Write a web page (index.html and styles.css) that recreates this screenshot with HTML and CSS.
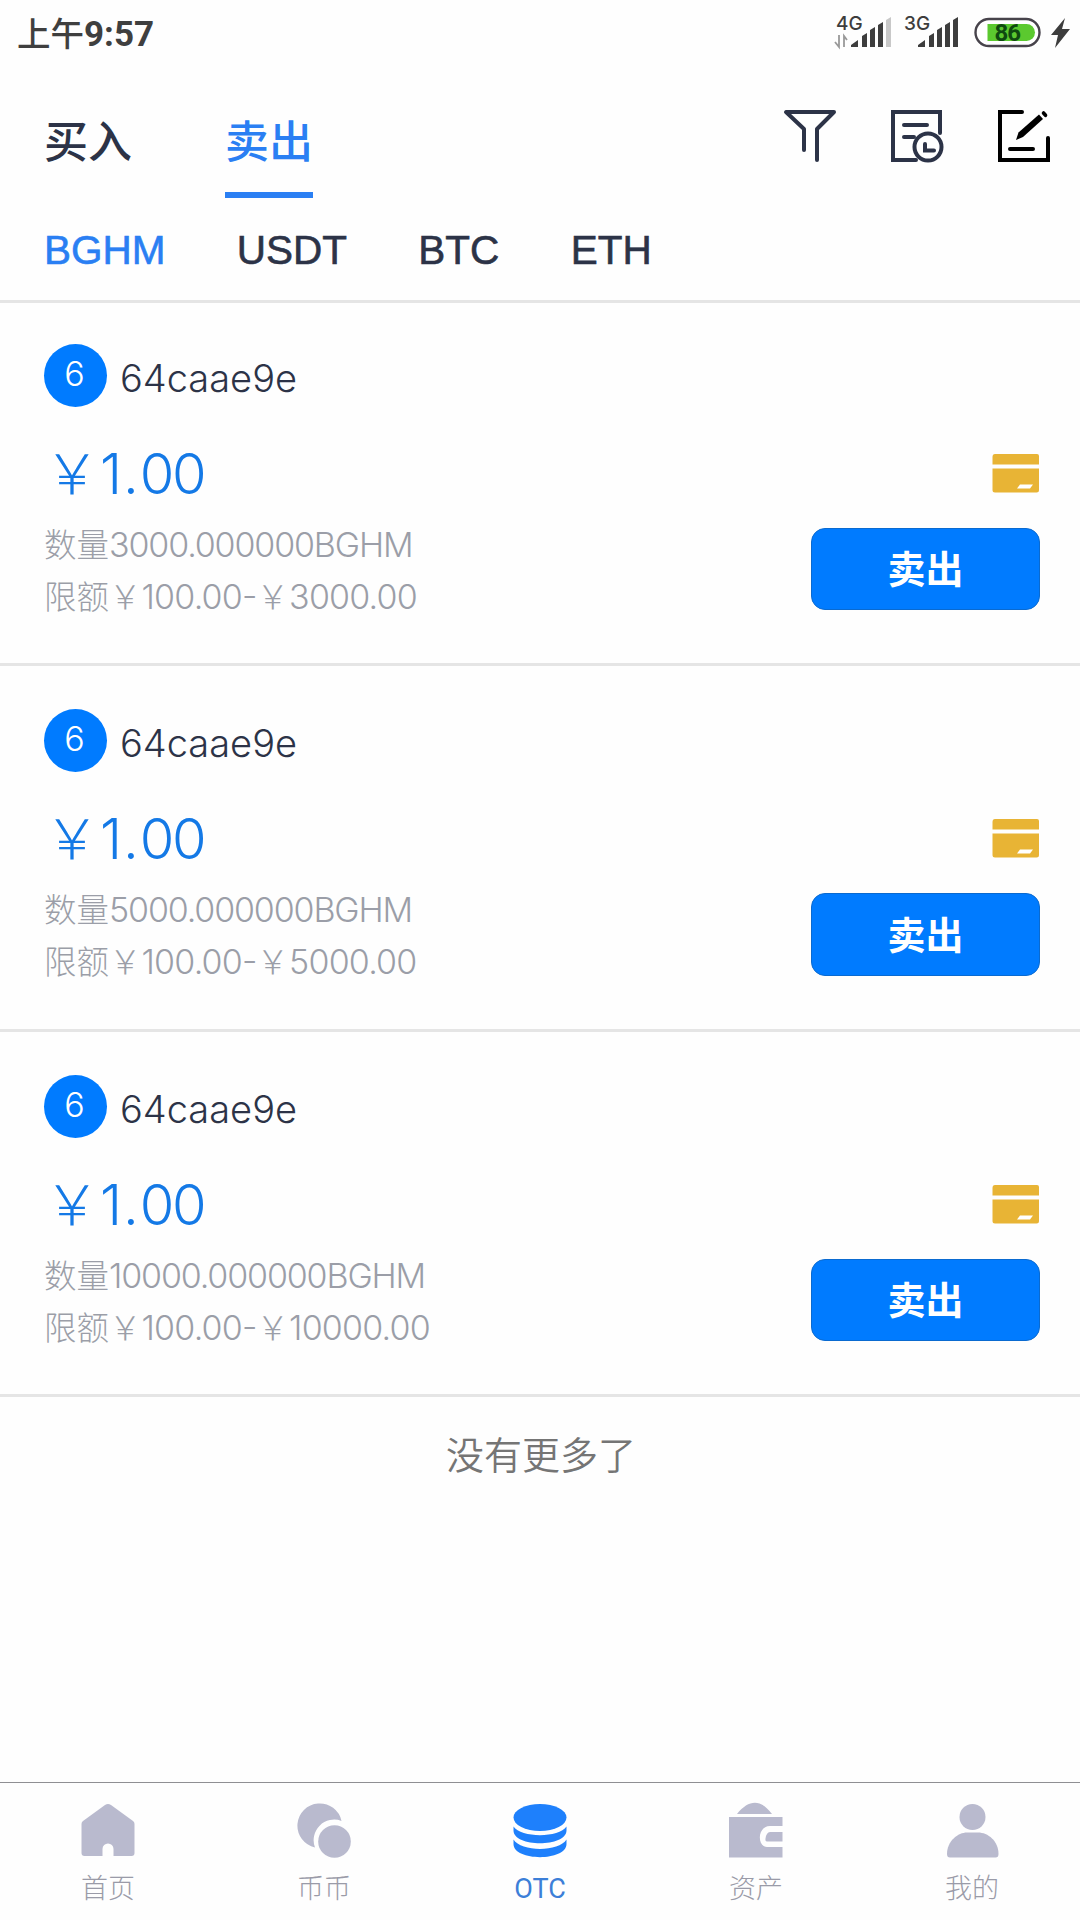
FILE: index.html
```html
<!DOCTYPE html>
<html lang="zh-CN">
<head>
<meta charset="utf-8">
<title>OTC</title>
<link rel="stylesheet" href="styles.css">
</head>
<body>
<div class="screen">
  <div class="status">
    <span class="clock">上午<b>9:57</b></span>
    <svg class="status-icons" width="240" height="52" viewBox="0 -8 240 52">
      <g fill="#3d3d3d">
        <text class="net" x="2" y="16">4G</text>
        <text class="net" x="70" y="16">3G</text>
        <path d="M17 33v-2l7-5v7zM28 33V22l5-3v14zM36 33V16l5-3v20zM44 33V11l5-3v25z"/>
        <path d="M84 33v-2l7-5v7zM95 33V22l5-3v14zM103 33V16l5-3v20zM111 33V11l5-3v25zM119 33V6l5-3v30z"/>
        <path d="M231 4 217 21h7l-3 13 15-19h-8z"/>
      </g>
      <path d="M52 33V6l5-3v30z" fill="#c8c8c8"/>
      <path d="M4 21v12l-4-5M9 33V22l3 4" transform="translate(1 0)" fill="none" stroke="#999" stroke-width="1.8"/>
      <rect x="141.500" y="5" width="64" height="27" rx="13.5" fill="#fff" stroke="#47434b" stroke-width="2.4"/>
      <path d="M153.500 10h39a8.5 8.5 0 0 1 0 17h-39z" fill="#5bc92f"/>
      <text class="charge" x="160.500" y="27">86</text>
    </svg>
  </div>

  <header class="top">
    <nav class="sides">
      <a class="side"><span>买入</span></a>
      <a class="side active"><span>卖出</span></a>
    </nav>
    <div class="tools">
      <svg width="54" height="54" viewBox="0 0 54 54" fill="none" stroke="#2c3347" stroke-width="4" stroke-linecap="round" stroke-linejoin="round"><path d="M21 41V20L3 3h48L34 20v31"/></svg>
      <svg width="54" height="54" viewBox="0 0 54 54" fill="none" stroke="#2c3347" stroke-width="4" stroke-linecap="round"><path d="M50 24V3H3v48h23M14 16h23M14 28h10"/><circle cx="38" cy="38" r="13.5"/><path d="M35 35v6.500h9"/></svg>
      <svg width="54" height="54" viewBox="0 0 54 54" fill="none" stroke="#000" stroke-width="4" stroke-linecap="round"><path d="M25 3H3v48h48V29M13 40h23"/><path d="M19 31l2.500-7.500L42 5.500l4 4.500-20 18z" fill="#000" stroke="none"/><path d="m46.500 4 2 2.300" stroke-width="3.6"/></svg>
    </div>
  </header>

  <nav class="coins">
    <a class="coin active">BGHM</a><a class="coin">USDT</a><a class="coin">BTC</a><a class="coin">ETH</a>
  </nav>

  <main class="list">
    <article class="offer">
      <div class="user"><span class="avatar">6</span><span class="name">64caae9e</span></div>
      <div class="body">
        <div class="info">
          <div class="price"><span class="yen">&#65509;</span><span class="unit">1.</span>00</div>
          <div class="line">数量<span>3000.000000BGHM</span></div>
          <div class="line limit">限额&#65509;<span>100.00-</span>&#65509;<span>3000.00</span></div>
        </div>
        <div class="action">
          <svg class="card" width="48" height="39" viewBox="0 0 48 39"><path d="M3 0h42q2 0 2 2v8.500H.5V3Q.5 0 3 0zM.5 14.500h46.500V36q0 2.500-2.500 2.500H3Q.5 38.500.5 36z" fill="#e8b435"/><path d="m28 30.500h13l-3 4H25z" fill="#fff"/></svg>
          <button class="sell">卖出</button>
        </div>
      </div>
    </article>
    <article class="offer">
      <div class="user"><span class="avatar">6</span><span class="name">64caae9e</span></div>
      <div class="body">
        <div class="info">
          <div class="price"><span class="yen">&#65509;</span><span class="unit">1.</span>00</div>
          <div class="line">数量<span>5000.000000BGHM</span></div>
          <div class="line limit">限额&#65509;<span>100.00-</span>&#65509;<span>5000.00</span></div>
        </div>
        <div class="action">
          <svg class="card" width="48" height="39" viewBox="0 0 48 39"><path d="M3 0h42q2 0 2 2v8.500H.5V3Q.5 0 3 0zM.5 14.500h46.500V36q0 2.500-2.500 2.500H3Q.5 38.500.5 36z" fill="#e8b435"/><path d="m28 30.500h13l-3 4H25z" fill="#fff"/></svg>
          <button class="sell">卖出</button>
        </div>
      </div>
    </article>
    <article class="offer">
      <div class="user"><span class="avatar">6</span><span class="name">64caae9e</span></div>
      <div class="body">
        <div class="info">
          <div class="price"><span class="yen">&#65509;</span><span class="unit">1.</span>00</div>
          <div class="line">数量<span>10000.000000BGHM</span></div>
          <div class="line limit">限额&#65509;<span>100.00-</span>&#65509;<span>10000.00</span></div>
        </div>
        <div class="action">
          <svg class="card" width="48" height="39" viewBox="0 0 48 39"><path d="M3 0h42q2 0 2 2v8.500H.5V3Q.5 0 3 0zM.5 14.500h46.500V36q0 2.500-2.500 2.500H3Q.5 38.500.5 36z" fill="#e8b435"/><path d="m28 30.500h13l-3 4H25z" fill="#fff"/></svg>
          <button class="sell">卖出</button>
        </div>
      </div>
    </article>
    <p class="end">没有更多了</p>
  </main>

  <nav class="tabbar">
    <a class="tab"><svg width="54" height="56" viewBox="0 0 54 56" fill="#b9bace"><path d="M24 3q3-2 6 0l22 16q1.500 1 1.500 3v29q0 3-3 3H32.500V47a5.500 5.500 0 0 0-11 0v7H3.500q-3 0-3-3V22q0-2 1.500-3z"/></svg>首页</a>
    <a class="tab"><svg width="54" height="56" viewBox="0 0 54 56" fill="#b9bace"><path d="M44.500 19A22.300 22.300 0 1 0 18 45.500 20.500 20.500 0 0 1 44.500 19z"/><circle cx="37.500" cy="39.500" r="16.300"/></svg>币币</a>
    <a class="tab active"><svg width="54" height="56" viewBox="0 0 54 56" fill="#1e80fc"><ellipse cx="27" cy="15.500" rx="26.500" ry="13.500"/><path d="M.5 24.500C8 36 46 36 53.500 24.500v4c0 17-53 17-53 0zM.5 37.500C8 50 46 50 53.500 37.500v4.500c0 17.500-53 17.500-53 0z"/></svg>OTC</a>
    <a class="tab"><svg width="54" height="56" viewBox="0 0 54 56" fill="#b9bace"><path d="M8 12C20-3 32-3 43 12zM0 15h53.500v9H41c-13 0-13 21-3 21h15.500v10.500H0z"/><path d="M41 30h12.500v9.500H38q-2 0-1.500-3 1-6.500 4.500-6.500z"/></svg>资产</a>
    <a class="tab"><svg width="54" height="56" viewBox="0 0 54 56" fill="#b9bace"><circle cx="27.500" cy="15" r="13"/><path d="M2 52C2 39 13 30.500 22 30.500h11C43 30.500 53.500 39 53.500 52q0 3.500-3 3.500H5q-3 0-3-3.500z"/></svg>我的</a>
  </nav>
</div>
</body>
</html>
```

FILE: styles.css
```css
* { box-sizing: border-box; }
body {
  margin: 0;
  background: #fefefe;
  color: #2c3347;
  font-family: Inter, "Noto Sans CJK SC", sans-serif;
}
.screen {
  width: 1080px;
  height: 1920px;
  display: flex;
  flex-direction: column;
  overflow: hidden;
}

.status {
  height: 68px;
  padding: 0 6px 0 17px;
  display: flex;
  justify-content: space-between;
}
.clock {
  font: 500 33.500px/64px "Noto Sans CJK SC", sans-serif;
  color: #3f3f3f;
}
.clock b { font: 700 35px/64px Roboto, sans-serif; }
.status-icons { margin-top: 6px; }
.net { font: 500 19px Inter, sans-serif; }
.charge { font: 700 24px Roboto, sans-serif; letter-spacing: -1px; fill: #0f4a10; }

.top {
  height: 130px;
  padding: 0 29px 0 44px;
  display: flex;
  justify-content: space-between;
}
.sides { display: flex; gap: 93px; }
.side {
  height: 130px;
  border-bottom: 6px solid transparent;
  font: 500 44px/142px "Noto Sans CJK SC", sans-serif;
}
.side.active { color: #2a7ff3; border-color: #2a7ff3; }
.tools { display: flex; gap: 53px; padding-top: 41px; }

.coins {
  height: 105px;
  padding-left: 44px;
  display: flex;
  gap: 71.300px;
  border-bottom: 3px solid #e5e5e5;
  font: 40.500px/104px "Liberation Sans", sans-serif;
  -webkit-text-stroke: .6px currentColor;
}
.coin.active { color: #2a7ff3; }

.list { flex: 1; }
.offer {
  height: 365.600px;
  padding: 43px 40px 0 44px;
  border-bottom: 3px solid #e5e5e5;
}
.offer:first-child { height: 363px; padding-top: 40.500px; }
.user { display: flex; gap: 13px; height: 63px; }
.avatar {
  width: 63px;
  height: 63px;
  padding-right: 2px;
  border-radius: 50%;
  background: #007bff;
  color: #fff;
  font-size: 34px;
  font-weight: 300;
  line-height: 60px;
  text-align: center;
}
.name {
  font-size: 38px;
  font-weight: 300;
  line-height: 69px;
}
.body { display: flex; justify-content: space-between; margin-top: 34px; }
.price {
  height: 66px;
  color: #1479e6;
  font-size: 56px;
  font-weight: 300;
  line-height: 66px;
  letter-spacing: -2.500px;
  margin-bottom: 10px;
}
.yen { font-family: "Noto Sans CJK SC", sans-serif; line-height: 0; letter-spacing: 0; }
.unit { letter-spacing: 1px; }
.line {
  height: 52px;
  color: #9b9ea8;
  font: 300 32.500px/52px "Noto Sans CJK SC", sans-serif;
  white-space: nowrap;
}
.line span {
  font: 300 34px/52px Inter, sans-serif;
  font-feature-settings: "case";
  letter-spacing: -1.150px;
}
.limit span { letter-spacing: -.8px; }
.action { display: flex; flex-direction: column; align-items: flex-end; }
.card { margin-top: 13px; }
.sell {
  width: 229px;
  height: 82.500px;
  margin-top: 35px;
  padding: 0 0 3px;
  border: 1px solid #0a6ad0;
  border-radius: 14px;
  background: #007bff;
  color: #fff;
  font: 700 38px/74px "Noto Sans CJK SC", sans-serif;
}
.end {
  margin: 0;
  padding: 28px 0 0 2px;
  color: #757575;
  text-align: center;
  font: 350 38px/56px "Noto Sans CJK SC", sans-serif;
}

.tabbar {
  height: 138px;
  border-top: 1px solid #8f8f93;
  display: grid;
  grid-template-columns: repeat(5, 1fr);
}
.tab {
  display: flex;
  flex-direction: column;
  align-items: center;
  padding-top: 19px;
  color: #9a9ba8;
  font: 300 27px/62px Roboto, "Noto Sans CJK SC", sans-serif;
}
.tab.active { color: #3c7fd8; font-weight: 400; }
```
